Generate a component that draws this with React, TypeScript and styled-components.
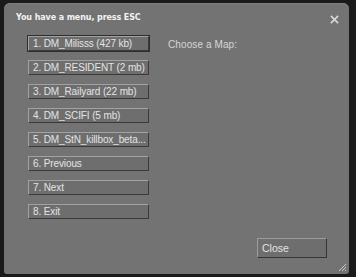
import React from "react";
import styled, { createGlobalStyle } from "styled-components";

const GlobalStyle = createGlobalStyle`
  html, body {
    margin: 0;
    padding: 0;
    background: #1a1a1a;
    width: 356px;
    height: 277px;
    overflow: hidden;
  }
`;

const maps = [
  "1. DM_Milisss (427 kb)",
  "2. DM_RESIDENT (2 mb)",
  "3. DM_Railyard (22 mb)",
  "4. DM_SCIFI (5 mb)",
  "5. DM_StN_killbox_beta...",
  "6. Previous",
  "7. Next",
  "8. Exit",
];

const App: React.FC = () => {
  return (
    <Screen>
      <GlobalStyle />
      <Dialog>
        <Header>
          <Title>You have a menu, press ESC</Title>
          <CloseIcon viewBox="0 0 10 10">
            <path d="M1 1 L9 9 M9 1 L1 9" stroke="#d8d8d8" strokeWidth="1.8" />
          </CloseIcon>
        </Header>
        <Body>
          <MenuList>
            {maps.map((label, i) => (
              <MenuButton key={label} focused={i === 0}>
                {label}
              </MenuButton>
            ))}
          </MenuList>
          <Prompt>Choose a Map:</Prompt>
        </Body>
        <Footer>
          <CloseButton>Close</CloseButton>
        </Footer>
        <Grip viewBox="0 0 9 9">
          <path d="M8 1 L1 8 M8 4 L4 8 M8 7 L7 8" stroke="#c8c8c8" strokeWidth="1" />
        </Grip>
      </Dialog>
    </Screen>
  );
};

const Screen = styled.div`
  width: 356px;
  height: 277px;
  padding: 3px 0 0 4px;
  box-sizing: border-box;
`;

const Dialog = styled.div`
  position: relative;
  width: 345px;
  height: 271px;
  background: #737373;
  border-radius: 6px 6px 3px 3px;
  box-shadow: inset 0 1px 0 #7e7e7e;
  display: flex;
  flex-direction: column;
  font-family: "Liberation Sans", Arial, sans-serif;
`;

const Header = styled.div`
  height: 29px;
  display: flex;
  align-items: center;
  justify-content: space-between;
  padding: 0 10px 2px 12px;
`;

const Title = styled.div`
  font-family: "DejaVu Sans", sans-serif;
  font-weight: bold;
  font-size: 8px;
  color: #f2f2f2;
  letter-spacing: -0.1px;
`;

const CloseIcon = styled.svg`
  width: 9px;
  height: 9px;
  margin-top: 3px;
`;

const Body = styled.div`
  display: flex;
  padding: 2px 0 0 24px;
  gap: 19px;
`;

const MenuList = styled.div`
  display: flex;
  flex-direction: column;
  gap: 9px;
`;

const MenuButton = styled.div<{ focused?: boolean }>`
  width: 121px;
  height: 15px;
  box-sizing: border-box;
  padding: 0 0 0 4px;
  display: flex;
  align-items: center;
  background: #6e6e6e;
  border-top: 1px solid #a2a2a2;
  border-left: 1px solid #a2a2a2;
  border-bottom: 1px solid #3a3a3a;
  border-right: 1px solid #3a3a3a;
  outline: ${p => (p.focused ? "1px solid #2e2e2e" : "none")};
  color: #e4e4e4;
  font-size: 10px;
  letter-spacing: -0.12px;
  white-space: nowrap;
  overflow: hidden;
`;

const Prompt = styled.div`
  font-size: 10px;
  letter-spacing: 0.1px;
  color: #d6d6d6;
  margin-top: 3px;
`;

const Footer = styled.div`
  margin-top: auto;
  display: flex;
  justify-content: flex-end;
  padding: 0 22px 16px 0;
`;

const CloseButton = styled.div`
  width: 70px;
  height: 20px;
  box-sizing: border-box;
  padding-left: 4px;
  display: flex;
  align-items: center;
  background: #6e6e6e;
  border-top: 1px solid #9c9c9c;
  border-left: 1px solid #9c9c9c;
  border-bottom: 1px solid #353535;
  border-right: 1px solid #353535;
  color: #e4e4e4;
  font-size: 10.5px;
`;

const Grip = styled.svg`
  position: absolute;
  right: 2px;
  bottom: 2px;
  width: 9px;
  height: 9px;
`;

export default App;
